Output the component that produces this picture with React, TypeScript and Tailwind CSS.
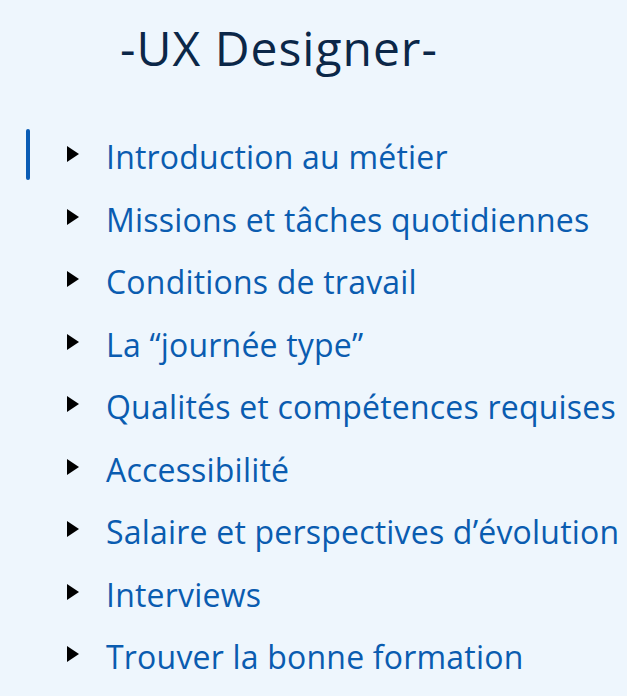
import React from 'react';

const items = [
  'Introduction au métier',
  'Missions et tâches quotidiennes',
  'Conditions de travail',
  'La “journée type”',
  'Qualités et compétences requises',
  'Accessibilité',
  'Salaire et perspectives d’évolution',
  'Interviews',
  'Trouver la bonne formation',
];

const Caret: React.FC = () => (
  <svg width="12" height="16" viewBox="0 0 12 16" className="shrink-0">
    <path d="M0 0 L12 8 L0 16 Z" fill="#000" />
  </svg>
);

export default function App() {
  return (
    <div
      className="min-h-[696px] w-[627px] bg-[#eef6fd] overflow-hidden"
      style={{ fontFamily: '"Open Sans", "Noto Sans", sans-serif' }}
    >
      <h1 className="pl-[120px] pt-[16px] text-[48px] leading-[64px] tracking-[1px] text-[#0b2748] font-normal whitespace-nowrap">
        -UX Designer-
      </h1>

      <ul className="mt-[46px]">
        {items.map((label, i) => (
          <li key={label} className="relative flex items-center h-[62.5px]">
            {i === 0 && (
              <span className="absolute left-[26px] top-[3px] h-[51px] w-[4px] rounded-full bg-[#0a5cb5]" />
            )}
            <div className="pl-[67px] flex items-center gap-[27px] -mt-[6px]">
              <Caret />
              <span className="text-[32px] tracking-[0.2px] text-[#0a5cb0] whitespace-nowrap leading-none mt-[6px]">
                {label}
              </span>
            </div>
          </li>
        ))}
      </ul>
    </div>
  );
}
